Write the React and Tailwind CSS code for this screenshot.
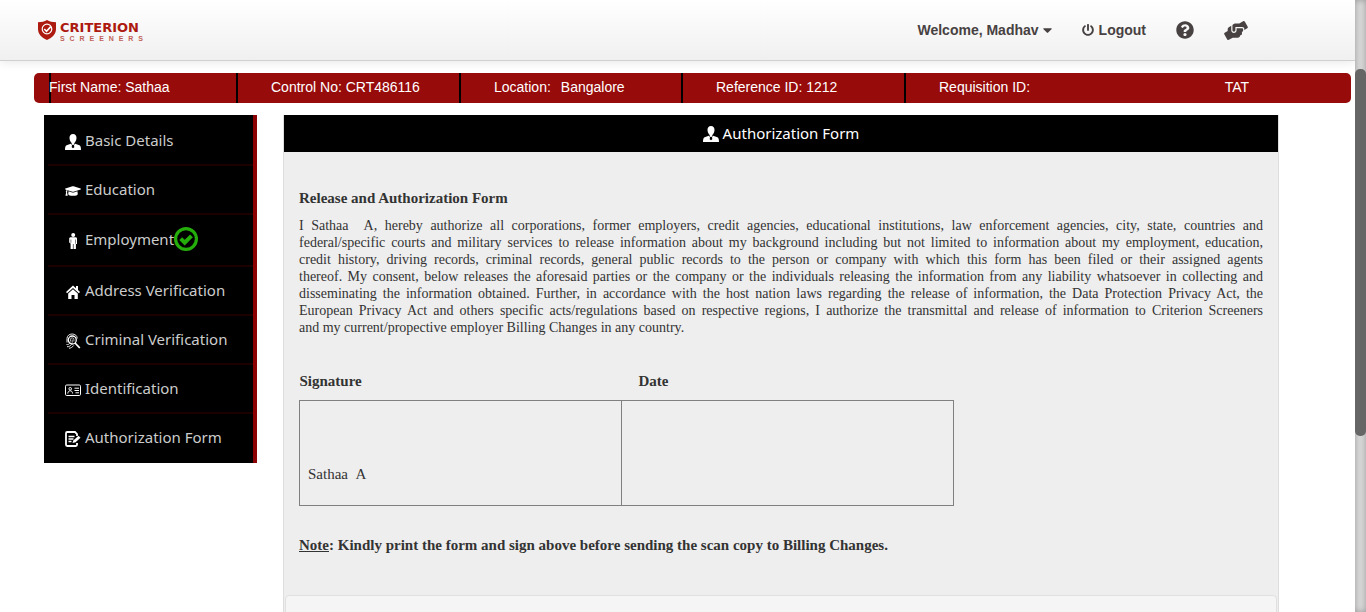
import {
  FaPowerOff,
  FaQuestionCircle,
  FaHandsHelping,
  FaCaretDown,
  FaGraduationCap,
} from "react-icons/fa";

function PersonIcon() {
  return (
    <svg viewBox="0 0 16 16" className="h-4 w-4 shrink-0" fill="currentColor" aria-hidden="true">
      <path d="M8 0C5.600 0 4.400 1.700 4.500 4c.1 2.300 1.200 4.300 2.200 5v1.200L8 11.200l1.300-1V9c1-.7 2.100-2.700 2.200-5C11.600 1.700 10.400 0 8 0z" />
      <path d="M5.800 9.800 1.600 11.300C.5 11.800 0 13 0 16h16c0-3-.5-4.200-1.600-4.700L10.200 9.800 9 11l.3 2.300L8 14.300l-1.300-1L7 11z" />
    </svg>
  );
}

function StandingPersonIcon() {
  return (
    <svg viewBox="0 0 16 16" className="h-4 w-4 shrink-0" fill="currentColor" aria-hidden="true">
      <circle cx="8.200" cy="2" r="2" />
      <path d="M5.500 4.300h5c1 0 1.500.6 1.500 1.600v5H10.900V16H8.500v-5h-.6v5H5.600v-5.500L4.200 9.500V6c0-1 .4-1.700 1.300-1.700z" />
      <path d="M5.900 6.500v3.300M10.500 6.500v4.200" fill="none" stroke="#000" strokeWidth=".5" />
    </svg>
  );
}

function HouseIcon() {
  return (
    <svg viewBox="0 0 16 16" className="h-4 w-4 shrink-0" fill="currentColor" aria-hidden="true">
      <path d="M8 1.500 1 8l1.100 1.200L8 3.900l5.900 5.300L15 8l-2-1.900V2h-2v2.200z" />
      <path d="M8 5.200 3.200 9.500V15h3.300v-4h3v4h3.300V9.500z" />
    </svg>
  );
}

function FingerprintSearchIcon() {
  return (
    <svg viewBox="0 0 16 16" className="h-4 w-4 shrink-0" fill="none" stroke="currentColor" aria-hidden="true">
      <circle cx="7.300" cy="7" r="4" strokeWidth="1.300" />
      <path d="M10 10l4.800 5" strokeWidth="1.800" />
      <path d="M5.500 8.500V6.500a1.700 1.700 0 0 1 3.400 0v2M7.200 6.500v3.300" strokeWidth=".7" />
      <path d="M2 9.500V5.500C2 2.700 4.400 1 7.200 1s5 1.700 5 4.500M1.500 11.500c1.500.3 2.500-.3 3-1M2 13.700c2 .2 3.500-.8 4.500-2.200M4 15.300c2-.2 3.500-1.300 4.700-2.800" strokeWidth=".9" />
    </svg>
  );
}

function IdCardIcon() {
  return (
    <svg viewBox="0 0 16 16" className="h-4 w-4 shrink-0" fill="none" stroke="currentColor" aria-hidden="true">
      <rect x=".5" y="3" width="15" height="10.500" rx="1.200" strokeWidth="1" />
      <circle cx="5.200" cy="6.800" r="1.300" />
      <path d="M2.800 11.500c.2-1.800 1-2.700 2.400-2.700s2.200.9 2.400 2.700M9.500 6.200H14M9.500 8.500H14M10.500 10.800H14" />
    </svg>
  );
}

function FormIcon() {
  return (
    <svg viewBox="0 0 16 16" className="h-4 w-4 shrink-0" fill="none" stroke="currentColor" aria-hidden="true">
      <path d="M12 5V3L10 1H2.200Q1 1 1 2.200v11.600Q1 15 2.200 15h8.600q1.200 0 1.200-1.200V12" strokeWidth="1.800" />
      <path d="M3.500 5.500h6M3.500 8h5M3.500 10.500h3" strokeWidth="1.400" />
      <path d="M7.500 12l.8-2.600L13.500 4.800l2 2-4.900 4.400z" fill="currentColor" stroke="none" />
    </svg>
  );
}

function CheckBadge() {
  return (
    <svg viewBox="0 0 24 24" className="h-6 w-6 shrink-0" fill="none" stroke="#24ad0b" role="img" aria-label="Completed">
      <circle cx="12" cy="12" r="10.400" strokeWidth="3.200" />
      <path d="M6.700 11.700l4 4 6.800-6.800" strokeWidth="4" />
    </svg>
  );
}

const menu = [
  { label: "Basic Details", icon: <PersonIcon /> },
  { label: "Education", icon: <FaGraduationCap className="h-4 w-4 shrink-0" /> },
  { label: "Employment", icon: <StandingPersonIcon />, done: true },
  { label: "Address Verification", icon: <HouseIcon /> },
  { label: "Criminal Verification", icon: <FingerprintSearchIcon /> },
  { label: "Identification", icon: <IdCardIcon /> },
  { label: "Authorization Form", icon: <FormIcon /> },
];

const releaseLines = [
  "I Sathaa \u00a0A, hereby authorize all corporations, former employers, credit agencies, educational institutions, law enforcement agencies, city, state, countries and",
  "federal/specific courts and military services to release information about my background including but not limited to information about my employment, education,",
  "credit history, driving records, criminal records, general public records to the person or company with which this form has been filed or their assigned agents",
  "thereof. My consent, below releases the aforesaid parties or the company or the individuals releasing the information from any liability whatsoever in collecting and",
  "disseminating the information obtained. Further, in accordance with the host nation laws regarding the release of information, the Data Protection Privacy Act, the",
  "European Privacy Act and others specific acts/regulations based on respective regions, I authorize the transmittal and release of information to Criterion Screeners",
  "and my current/propective employer Billing Changes in any country.",
];

function Logo() {
  return (
    <a href="#home" className="flex items-center gap-1 text-[#ac1a10]">
      <svg viewBox="0 0 18 20" className="h-5 w-[18px]" aria-hidden="true">
        <path d="M9 0c2.500 1.600 5.500 2.200 9 2.200V9c0 5-3.500 8.800-9 11C3.500 17.800 0 14 0 9V2.200C3.500 2.200 6.500 1.600 9 0z" fill="currentColor" />
        <circle cx="9" cy="9" r="4.800" fill="none" stroke="#fff" strokeWidth="1.200" />
        <path d="M6.300 9l2.200 2.400 4.300-4.800" fill="none" stroke="#fff" strokeWidth="1.600" />
      </svg>
      <span className="flex w-[83px] flex-col pt-[2px]">
        <span className="font-['DejaVu_Sans'] text-[13px] leading-[14px] font-bold">CRITERION</span>
        <span className="flex justify-between font-['Liberation_Sans'] text-[7px] leading-[7px] font-bold opacity-70" aria-label="SCREENERS">
          {"SCREENERS".split("").map((letter, i) => (
            <span key={i}>{letter}</span>
          ))}
        </span>
      </span>
    </a>
  );
}

function Header() {
  return (
    <header className="flex h-[61px] shrink-0 items-center justify-between border-b border-[#d0d0d0] bg-linear-to-b from-white to-[#f0f0f0] pr-[107px] pl-[38px] shadow-[0_1px_10px_rgba(0,0,0,0.1)]">
      <Logo />
      <nav className="flex items-center text-sm font-bold text-[#474142]">
        <button type="button" className="flex items-center gap-1">
          Welcome, Madhav
          <FaCaretDown className="h-4 w-[9px]" />
        </button>
        <a href="#logout" className="ml-[30px] flex items-center gap-[5px]">
          <FaPowerOff className="h-3 w-3" />
          Logout
        </a>
        <a href="#help" aria-label="Help" className="ml-[30px]">
          <FaQuestionCircle className="h-[18px] w-[18px]" />
        </a>
        <a href="#support" aria-label="Support" className="ml-[30px]">
          <FaHandsHelping className="h-[19px] w-6" />
        </a>
      </nav>
    </header>
  );
}

function InfoBar() {
  return (
    <div className="mt-3 mr-1 ml-[34px] grid h-[30px] shrink-0 grid-cols-[15px_187fr_223fr_222fr_223fr_447fr] rounded-[5px] bg-[#970b0b] text-sm leading-7 whitespace-nowrap text-white">
      <span />
      <div className="shadow-[inset_2px_0_0_#000]">First Name: Sathaa</div>
      <div className="pl-[35px] shadow-[inset_2px_0_0_#000]">Control No: CRT486116</div>
      <div className="flex gap-[10px] pl-[35px] shadow-[inset_2px_0_0_#000]">
        <span>Location:</span>
        <span>Bangalore</span>
      </div>
      <div className="pl-[35px] shadow-[inset_2px_0_0_#000]">Reference ID: 1212</div>
      <div className="flex justify-between pr-[102px] pl-[35px] shadow-[inset_2px_0_0_#000]">
        <span>Requisition ID:</span>
        <span>TAT</span>
      </div>
    </div>
  );
}

function Sidebar() {
  return (
    <nav className="w-[213px] shrink-0 self-start border-r-4 border-[#8b0000] bg-black pt-[2px] pb-[2px] pl-1 font-['Noto_Sans',sans-serif] text-[15px] leading-5 text-[#ccc]">
      <ul>
        {menu.map(({ label, icon, done }) => (
          <li key={label} className="border-b-2 border-[#1c0000] last:border-b-0">
            <a href="#section" className="flex min-h-[47px] items-center pl-[17px]">
              <span className="mr-1 pt-[2px] text-white">{icon}</span>
              <span className="pb-[2px]">{label}</span>
              {done && (
                <span className="pt-3 pb-[14px]">
                  <CheckBadge />
                </span>
              )}
            </a>
          </li>
        ))}
      </ul>
    </nav>
  );
}

function AuthorizationPanel() {
  return (
    <section className="mr-[76px] ml-[26px] min-w-0 flex-1 self-start border border-t-0 border-[#ddd] bg-[#eee]">
      <h1 className="flex h-[37px] items-center justify-center gap-1 bg-black font-['Noto_Sans',sans-serif] text-[15px] text-white">
        <PersonIcon />
        Authorization Form
      </h1>
      <div className="px-[15px] pt-[38px] pb-[41px] font-['Liberation_Serif',serif] text-[15px] leading-[17px] text-[#333]">
        <h2 className="font-bold">Release and Authorization Form</h2>
        <p className="mt-[10px] text-justify text-sm leading-[17px]">
          {releaseLines.map((line) => (
            <span key={line} className="block [text-align-last:justify] last:[text-align-last:left]">
              {line}{" "}
            </span>
          ))}
        </p>
        <table className="mt-[37px] w-[655px] table-fixed border-collapse text-left">
          <colgroup>
            <col className="w-[322px]" />
            <col />
          </colgroup>
          <thead>
            <tr>
              <th className="pb-[10px] font-bold">Signature</th>
              <th className="pb-[10px] pl-[17px] font-bold">Date</th>
            </tr>
          </thead>
          <tbody>
            <tr>
              <td className="border border-[#808080] px-2 pt-[65px] pb-[22px]">Sathaa &nbsp;A</td>
              <td className="border border-[#808080]" />
            </tr>
          </tbody>
        </table>
        <p className="mt-[31px] font-bold">
          <span className="underline">Note</span>: Kindly print the form and sign above before sending the scan copy to Billing Changes.
        </p>
      </div>
      <div className="mx-px h-16 rounded-t border border-[#e0e0e0] bg-[#f5f5f5]" />
    </section>
  );
}

export default function App() {
  return (
    <div className="flex h-screen overflow-hidden bg-white font-['Liberation_Sans',sans-serif]">
      <div className="flex min-w-0 flex-1 flex-col overflow-hidden">
        <Header />
        <InfoBar />
        <main className="mt-3 flex pl-11">
          <Sidebar />
          <AuthorizationPanel />
        </main>
      </div>
      <div className="w-[11px] shrink-0 bg-[#d9d9d9] pt-[69px] shadow-[inset_0_0_6px_rgba(0,0,0,0.3)]" aria-hidden="true">
        <div className="h-[367px] rounded-[5px] bg-[#666]" />
      </div>
    </div>
  );
}
